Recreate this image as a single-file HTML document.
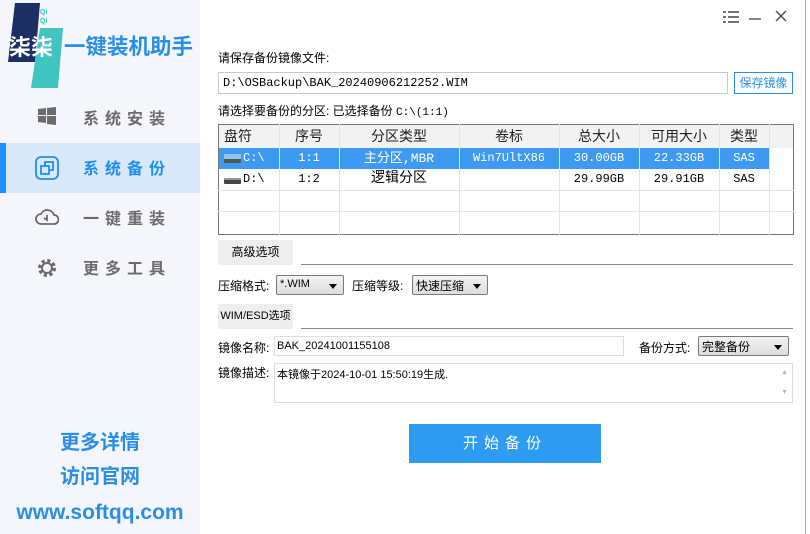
<!DOCTYPE html>
<html><head><meta charset="utf-8"><style>
*{margin:0;padding:0;box-sizing:border-box}
body{width:810px;height:534px;position:relative;background:#fff;font-family:"Liberation Sans","Noto Sans CJK SC",sans-serif;font-size:12px;color:#000;overflow:hidden}
.a{position:absolute}
.side{left:0;top:0;width:200px;height:534px;background:#f4f6fb}
.menu{left:0;width:200px;height:50px;font-size:16px;font-weight:bold;color:#6b6b6b;letter-spacing:6px}
.menu span{position:absolute;left:83px;top:12px}
.cn{font-family:"Liberation Sans","WenQuanYi Zen Hei",sans-serif;font-size:12px}
.box{border:1px solid #c8c8c8;background:#fff}
.combo{border:1px solid #7a7a7a;border-radius:2px;background:linear-gradient(#f4f4f4,#dcdcdc);height:20px;font-size:11px;padding:2px 3px}
.combo:after{content:"";position:absolute;right:6px;top:8px;border-left:4px solid transparent;border-right:4px solid transparent;border-top:5px solid #000}
.th{top:124px;height:24px;font-size:14px;color:#222;text-align:center;line-height:24px}
.tab{background:#eee;text-align:center;font-size:12px;line-height:25px}
</style></head><body>
<div class="a side"></div>
<svg class="a" style="left:0;top:0" width="70" height="95">
<polygon points="15,3 40,3 35,62 8,62" fill="#1b2f64"/>
<polygon points="40,28 63,28 58,88 31,88" fill="#40c5c2"/>
<text x="40" y="14" font-size="7" fill="#3bbdb8" font-weight="bold" font-family="Liberation Sans">Qi</text>
<text x="40" y="23" font-size="7" fill="#3bbdb8" font-weight="bold" font-family="Liberation Sans">Qi</text>
<text x="9" y="55" font-size="22" fill="#fff" font-weight="bold" font-family="Noto Sans CJK SC,sans-serif">柒柒</text>
</svg>
<div class="a" style="left:64px;top:30px;font-size:21.5px;font-weight:bold;color:#2a8ee8;letter-spacing:0px">一键装机助手</div>
<div class="a menu" style="top:93px"><svg class="a" style="left:37px;top:14px" width="20" height="18"><path d="M1 2l8-1v7H1zM10 1l9-1v8h-9zM1 9h8v7l-8-1zM10 9h9v9l-9-1z" fill="#6b6b6b"/></svg><span>系统安装</span></div>
<div class="a menu" style="top:143px;background:#d9e8fb;color:#1e8ff0"><div class="a" style="left:0;top:0;width:6px;height:50px;background:#1e90ff"></div><svg class="a" style="left:35px;top:13px" width="24" height="24"><rect x="1" y="1" width="22" height="22" rx="5" fill="none" stroke="#1e8ff0" stroke-width="1.8"/><rect x="6" y="10" width="8" height="8" fill="none" stroke="#1e8ff0" stroke-width="1.8"/><path d="M10 10V6h8v8h-4" fill="none" stroke="#1e8ff0" stroke-width="1.8"/></svg><span>系统备份</span></div>
<div class="a menu" style="top:193px"><svg class="a" style="left:35px;top:14px" width="24" height="20"><path d="M6 17a5 5 0 0 1 0-10a7 7 0 0 1 13 1a4.5 4.5 0 0 1 0 9z" fill="none" stroke="#6b6b6b" stroke-width="1.8"/><path d="M12 8v5l-3-2" fill="none" stroke="#6b6b6b" stroke-width="1.8"/></svg><span>一键重装</span></div>
<div class="a menu" style="top:243px"><svg class="a" style="left:36px;top:14px" width="22" height="22"><circle cx="11" cy="11" r="7" fill="none" stroke="#6b6b6b" stroke-width="4" stroke-dasharray="3 2.5"/><circle cx="11" cy="11" r="5" fill="none" stroke="#6b6b6b" stroke-width="2"/></svg><span>更多工具</span></div>
<div class="a" style="left:0;width:200px;top:426px;text-align:center;font-size:20px;font-weight:bold;color:#2a8ee8;line-height:34px">更多详情<br>访问官网</div>
<div class="a" style="left:0;width:200px;top:501px;text-align:center;font-size:21px;font-weight:bold;color:#2a8ee8">www.softqq.com</div>

<svg class="a" style="left:722px;top:9px" width="80" height="16"><path d="M1 3h3M6 3h11M1 8h3M6 8h11M1 13h3M6 13h11" stroke="#444" stroke-width="1.6"/><path d="M27 10h12" stroke="#444" stroke-width="1.3"/><path d="M54 2l10 10M64 2l-10 10" stroke="#444" stroke-width="1.3"/></svg>
<div class="a" style="left:805px;top:0;width:1px;height:534px;background:#7fb8ee"></div>

<div class="a cn" style="left:218px;top:49px">请保存备份镜像文件:</div>
<div class="a box" style="left:218px;top:72px;width:510px;height:22px;font-family:'Liberation Mono',monospace;font-size:12px;padding:3px 4px">D:\OSBackup\BAK_20240906212252.WIM</div>
<div class="a" style="left:734px;top:72px;width:59px;height:22px;border:1px solid #2a8ee8;color:#2a8ee8;font-size:12px;text-align:center;line-height:20px">保存镜像</div>
<div class="a cn" style="left:218px;top:102px">请选择要备份的分区: 已选择备份 <span style="font-family:'Liberation Mono',monospace;font-size:11px">C:\(1:1)</span></div>

<div class="a" style="left:218px;top:124px;width:576px;height:111px;border:1px solid #777;background:#fff"></div>
<div class="a" style="left:219px;top:125px;width:574px;height:23px;background:#f2f2f2"></div>
<div class="a" style="left:219px;top:148px;width:550px;height:21px;background:#3d9af0"></div>
<svg class="a" style="left:218px;top:124px" width="576" height="111">
<g stroke="#e4e4e4"><path d="M61.5 0v111M121.5 0v111M241.5 0v111M341.5 0v111M421.5 0v111M501.5 0v111M551.5 0v111"/><path d="M0 66.5h576M0 87.5h576"/></g>
<rect x="6" y="30" width="17" height="8" fill="#8ec3f2"/><rect x="6" y="35" width="17" height="4" fill="#555"/>
<rect x="6" y="54" width="17" height="6" rx="1" fill="#444"/><rect x="6" y="54" width="17" height="2" fill="#999"/>
</svg>
<div class="a th" style="left:218px;width:40px">盘符</div>
<div class="a th" style="left:279px;width:60px">序号</div>
<div class="a th" style="left:339px;width:120px">分区类型</div>
<div class="a th" style="left:459px;width:100px">卷标</div>
<div class="a th" style="left:559px;width:80px">总大小</div>
<div class="a th" style="left:639px;width:80px">可用大小</div>
<div class="a th" style="left:719px;width:50px">类型</div>
<div class="a" style="left:219px;top:148px;width:575px;height:21px;color:#fff;font-size:12px;line-height:21px;font-family:'Liberation Mono','Noto Sans CJK SC',monospace">
<span class="a" style="left:24px">C:\</span><span class="a" style="left:60px;width:60px;text-align:center">1:1</span><span class="a" style="left:120px;width:120px;text-align:center;font-size:13px">主分区,MBR</span><span class="a" style="left:240px;width:100px;text-align:center">Win7UltX86</span><span class="a" style="left:340px;width:80px;text-align:center">30.00GB</span><span class="a" style="left:420px;width:80px;text-align:center">22.33GB</span><span class="a" style="left:500px;width:50px;text-align:center">SAS</span></div>
<div class="a" style="left:219px;top:169px;width:575px;height:21px;color:#000;font-size:12px;line-height:21px;font-family:'Liberation Mono','Noto Sans CJK SC',monospace">
<span class="a" style="left:24px">D:\</span><span class="a" style="left:60px;width:60px;text-align:center">1:2</span><span class="a" style="left:120px;width:120px;text-align:center;font-size:14px">逻辑分区</span><span class="a" style="left:340px;width:80px;text-align:center">29.99GB</span><span class="a" style="left:420px;width:80px;text-align:center">29.91GB</span><span class="a" style="left:500px;width:50px;text-align:center">SAS</span></div>

<div class="a tab" style="left:218px;top:240px;width:75px;height:25px">高级选项</div>
<div class="a" style="left:301px;top:264px;width:492px;height:1px;background:#888"></div>
<div class="a cn" style="left:218px;top:277px">压缩格式:</div>
<div class="a combo" style="left:276px;top:275px;width:68px">*.WIM</div>
<div class="a cn" style="left:352px;top:277px">压缩等级:</div>
<div class="a combo" style="left:412px;top:275px;width:76px;font-size:12px;padding-top:1px">快速压缩</div>
<div class="a tab" style="left:218px;top:304px;width:75px;height:25px;font-size:11px">WIM/ESD选项</div>
<div class="a" style="left:301px;top:328px;width:492px;height:1px;background:#888"></div>
<div class="a cn" style="left:218px;top:339px">镜像名称:</div>
<div class="a box" style="left:274px;top:336px;width:350px;height:20px;font-size:11px;padding:3px 2px;border-color:#ddd">BAK_20241001155108</div>
<div class="a cn" style="left:639px;top:339px">备份方式:</div>
<div class="a combo" style="left:698px;top:336px;width:91px;font-size:12px;padding-top:1px">完整备份</div>
<div class="a cn" style="left:218px;top:364px">镜像描述:</div>
<div class="a box" style="left:274px;top:363px;width:519px;height:40px;font-size:11px;padding:2px;border-color:#ddd">本镜像于2024-10-01 15:50:19生成.</div>
<div class="a" style="left:781px;top:369px;color:#bbb;font-size:7px">▲</div>
<div class="a" style="left:781px;top:389px;color:#bbb;font-size:7px">▼</div>
<div class="a" style="left:409px;top:424px;width:192px;height:39px;background:#2d9bf0;color:#fff;font-size:15px;text-align:center;line-height:39px;letter-spacing:6px">开始备份</div>
</body></html>
